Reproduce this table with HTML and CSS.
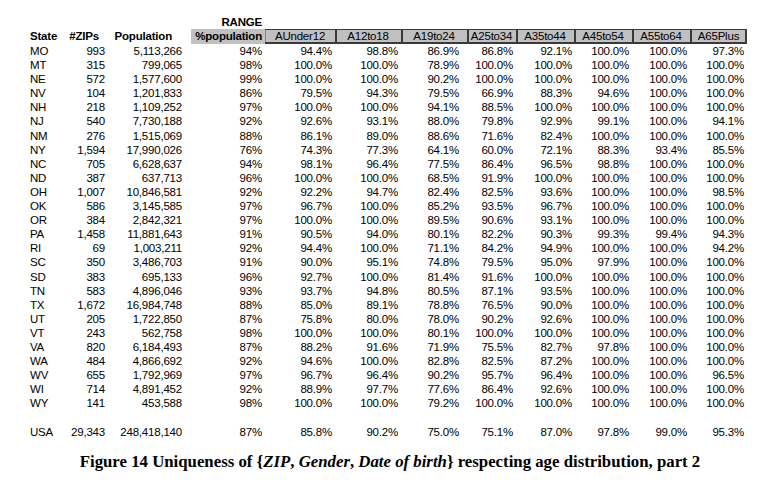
FILE: index.html
```html
<!DOCTYPE html>
<html>
<head>
<meta charset="utf-8">
<link rel="stylesheet" href="styles.css">
</head>
<body>
<div class="page">
<table class="data">
<colgroup>
<col class="c-state"><col class="c-zips"><col class="c-pop"><col class="c-pct"><col class="c-a1"><col class="c-a2"><col class="c-a3"><col class="c-a4"><col class="c-a5"><col class="c-a6"><col class="c-a7"><col class="c-a8">
</colgroup>
<thead>
<tr class="range-row"><th></th><th></th><th></th><th class="num p3">RANGE</th><th colspan="8"></th></tr>
<tr class="head-row">
<th class="left">State</th><th class="num p9">#ZIPs</th><th class="num p19">Population</th><th class="num p3 gray">%population</th>
<th class="box box-first">AUnder12</th><th class="box sep">A12to18</th><th class="box sep">A19to24</th><th class="box sep">A25to34</th><th class="box sep">A35to44</th><th class="box sep">A45to54</th><th class="box sep">A55to64</th><th class="box sep">A65Plus</th>
</tr>
</thead>
<tbody>
<tr><td>MO</td><td>993</td><td>5,113,266</td><td>94%</td><td>94.4%</td><td>98.8%</td><td>86.9%</td><td>86.8%</td><td>92.1%</td><td>100.0%</td><td>100.0%</td><td>97.3%</td></tr>
<tr><td>MT</td><td>315</td><td>799,065</td><td>98%</td><td>100.0%</td><td>100.0%</td><td>78.9%</td><td>100.0%</td><td>100.0%</td><td>100.0%</td><td>100.0%</td><td>100.0%</td></tr>
<tr><td>NE</td><td>572</td><td>1,577,600</td><td>99%</td><td>100.0%</td><td>100.0%</td><td>90.2%</td><td>100.0%</td><td>100.0%</td><td>100.0%</td><td>100.0%</td><td>100.0%</td></tr>
<tr><td>NV</td><td>104</td><td>1,201,833</td><td>86%</td><td>79.5%</td><td>94.3%</td><td>79.5%</td><td>66.9%</td><td>88.3%</td><td>94.6%</td><td>100.0%</td><td>100.0%</td></tr>
<tr><td>NH</td><td>218</td><td>1,109,252</td><td>97%</td><td>100.0%</td><td>100.0%</td><td>94.1%</td><td>88.5%</td><td>100.0%</td><td>100.0%</td><td>100.0%</td><td>100.0%</td></tr>
<tr><td>NJ</td><td>540</td><td>7,730,188</td><td>92%</td><td>92.6%</td><td>93.1%</td><td>88.0%</td><td>79.8%</td><td>92.9%</td><td>99.1%</td><td>100.0%</td><td>94.1%</td></tr>
<tr><td>NM</td><td>276</td><td>1,515,069</td><td>88%</td><td>86.1%</td><td>89.0%</td><td>88.6%</td><td>71.6%</td><td>82.4%</td><td>100.0%</td><td>100.0%</td><td>100.0%</td></tr>
<tr><td>NY</td><td>1,594</td><td>17,990,026</td><td>76%</td><td>74.3%</td><td>77.3%</td><td>64.1%</td><td>60.0%</td><td>72.1%</td><td>88.3%</td><td>93.4%</td><td>85.5%</td></tr>
<tr><td>NC</td><td>705</td><td>6,628,637</td><td>94%</td><td>98.1%</td><td>96.4%</td><td>77.5%</td><td>86.4%</td><td>96.5%</td><td>98.8%</td><td>100.0%</td><td>100.0%</td></tr>
<tr><td>ND</td><td>387</td><td>637,713</td><td>96%</td><td>100.0%</td><td>100.0%</td><td>68.5%</td><td>91.9%</td><td>100.0%</td><td>100.0%</td><td>100.0%</td><td>100.0%</td></tr>
<tr><td>OH</td><td>1,007</td><td>10,846,581</td><td>92%</td><td>92.2%</td><td>94.7%</td><td>82.4%</td><td>82.5%</td><td>93.6%</td><td>100.0%</td><td>100.0%</td><td>98.5%</td></tr>
<tr><td>OK</td><td>586</td><td>3,145,585</td><td>97%</td><td>96.7%</td><td>100.0%</td><td>85.2%</td><td>93.5%</td><td>96.7%</td><td>100.0%</td><td>100.0%</td><td>100.0%</td></tr>
<tr><td>OR</td><td>384</td><td>2,842,321</td><td>97%</td><td>100.0%</td><td>100.0%</td><td>89.5%</td><td>90.6%</td><td>93.1%</td><td>100.0%</td><td>100.0%</td><td>100.0%</td></tr>
<tr><td>PA</td><td>1,458</td><td>11,881,643</td><td>91%</td><td>90.5%</td><td>94.0%</td><td>80.1%</td><td>82.2%</td><td>90.3%</td><td>99.3%</td><td>99.4%</td><td>94.3%</td></tr>
<tr><td>RI</td><td>69</td><td>1,003,211</td><td>92%</td><td>94.4%</td><td>100.0%</td><td>71.1%</td><td>84.2%</td><td>94.9%</td><td>100.0%</td><td>100.0%</td><td>94.2%</td></tr>
<tr><td>SC</td><td>350</td><td>3,486,703</td><td>91%</td><td>90.0%</td><td>95.1%</td><td>74.8%</td><td>79.5%</td><td>95.0%</td><td>97.9%</td><td>100.0%</td><td>100.0%</td></tr>
<tr><td>SD</td><td>383</td><td>695,133</td><td>96%</td><td>92.7%</td><td>100.0%</td><td>81.4%</td><td>91.6%</td><td>100.0%</td><td>100.0%</td><td>100.0%</td><td>100.0%</td></tr>
<tr><td>TN</td><td>583</td><td>4,896,046</td><td>93%</td><td>93.7%</td><td>94.8%</td><td>80.5%</td><td>87.1%</td><td>93.5%</td><td>100.0%</td><td>100.0%</td><td>100.0%</td></tr>
<tr><td>TX</td><td>1,672</td><td>16,984,748</td><td>88%</td><td>85.0%</td><td>89.1%</td><td>78.8%</td><td>76.5%</td><td>90.0%</td><td>100.0%</td><td>100.0%</td><td>100.0%</td></tr>
<tr><td>UT</td><td>205</td><td>1,722,850</td><td>87%</td><td>75.8%</td><td>80.0%</td><td>78.0%</td><td>90.2%</td><td>92.6%</td><td>100.0%</td><td>100.0%</td><td>100.0%</td></tr>
<tr><td>VT</td><td>243</td><td>562,758</td><td>98%</td><td>100.0%</td><td>100.0%</td><td>80.1%</td><td>100.0%</td><td>100.0%</td><td>100.0%</td><td>100.0%</td><td>100.0%</td></tr>
<tr><td>VA</td><td>820</td><td>6,184,493</td><td>87%</td><td>88.2%</td><td>91.6%</td><td>71.9%</td><td>75.5%</td><td>82.7%</td><td>97.8%</td><td>100.0%</td><td>100.0%</td></tr>
<tr><td>WA</td><td>484</td><td>4,866,692</td><td>92%</td><td>94.6%</td><td>100.0%</td><td>82.8%</td><td>82.5%</td><td>87.2%</td><td>100.0%</td><td>100.0%</td><td>100.0%</td></tr>
<tr><td>WV</td><td>655</td><td>1,792,969</td><td>97%</td><td>96.7%</td><td>96.4%</td><td>90.2%</td><td>95.7%</td><td>96.4%</td><td>100.0%</td><td>100.0%</td><td>96.5%</td></tr>
<tr><td>WI</td><td>714</td><td>4,891,452</td><td>92%</td><td>88.9%</td><td>97.7%</td><td>77.6%</td><td>86.4%</td><td>92.6%</td><td>100.0%</td><td>100.0%</td><td>100.0%</td></tr>
<tr><td>WY</td><td>141</td><td>453,588</td><td>98%</td><td>100.0%</td><td>100.0%</td><td>79.2%</td><td>100.0%</td><td>100.0%</td><td>100.0%</td><td>100.0%</td><td>100.0%</td></tr>
<tr class="blank"><td colspan="12"></td></tr>
<tr><td>USA</td><td>29,343</td><td>248,418,140</td><td>87%</td><td>85.8%</td><td>90.2%</td><td>75.0%</td><td>75.1%</td><td>87.0%</td><td>97.8%</td><td>99.0%</td><td>95.3%</td></tr>
</tbody>
</table>
<p class="caption">Figure 14 Uniqueness of {<i>ZIP</i>, <i>Gender</i>, <i>Date of birth</i>} respecting age distribution, part 2</p>
</div>
</body>
</html>
```
FILE: styles.css
```css
html, body {
  margin: 0;
  padding: 0;
  background: #fff;
}
.page {
  width: 780px;
  padding-top: 15px;
}
.data {
  margin-left: 30px;
  border-collapse: collapse;
  table-layout: fixed;
  width: 717px;
  font-family: "Liberation Sans", Arial, sans-serif;
  font-size: 11.5px;
  letter-spacing: -0.2px;
  color: #000;
}
.c-state { width: 30px; }
.c-zips { width: 48px; }
.c-pop { width: 83px; }
.c-pct { width: 74px; }
.c-a1 { width: 70px; }
.c-a2 { width: 66px; }
.c-a3 { width: 66px; }
.c-a4 { width: 49px; }
.c-a5 { width: 58px; }
.c-a6 { width: 58px; }
.c-a7 { width: 58px; }
.c-a8 { width: 57px; }
.data th, .data td {
  padding: 0;
  white-space: nowrap;
  overflow: visible;
}
.range-row th {
  height: 14px;
  line-height: 14px;
  font-weight: bold;
}
.head-row th {
  height: 15px;
  line-height: 15px;
  font-weight: bold;
}
.left { text-align: left; }
.num { text-align: right; }
.p3 { padding-right: 3px !important; }
.p9 { padding-right: 9px !important; }
.p19 { padding-right: 19px !important; }
.gray { background: #c0c0c0; }
.head-row .box {
  font-weight: normal;
  text-align: center;
  background: #c0c0c0;
  box-shadow: inset 0 1px 0 #3a3a3a, inset 0 -2px 0 #3a3a3a;
}
.head-row .box-first {
  box-shadow: inset 0 1px 0 #3a3a3a, inset 0 -2px 0 #3a3a3a, inset 1px 0 0 #8a8a8a;
}
.head-row .sep {
  box-shadow: inset 0 1px 0 #3a3a3a, inset 0 -2px 0 #3a3a3a, inset 2px 0 0 #3a3a3a;
}
.head-row .box:last-child {
  box-shadow: inset 0 1px 0 #3a3a3a, inset 0 -2px 0 #3a3a3a, inset 2px 0 0 #3a3a3a, inset -2px 0 0 #3a3a3a;
}
.data tbody tr {
  height: 14.1px;
}
.data tbody td {
  line-height: 14.1px;
  text-align: right;
  padding-right: 3px;
}
.data tbody td:first-child { text-align: left; padding-right: 0; }
.data tbody td:nth-child(3) { padding-right: 9px; }
.data tbody td:nth-child(7) { padding-right: 8px; }
.data tbody td:nth-child(9) { padding-right: 2px; }
.blank td { height: 14.1px; }
.caption {
  margin: 14px 0 0;
  text-align: center;
  font-family: "Liberation Serif", "Times New Roman", serif;
  font-weight: bold;
  font-size: 16.8px;
  line-height: 18px;
  color: #000;
}
```
